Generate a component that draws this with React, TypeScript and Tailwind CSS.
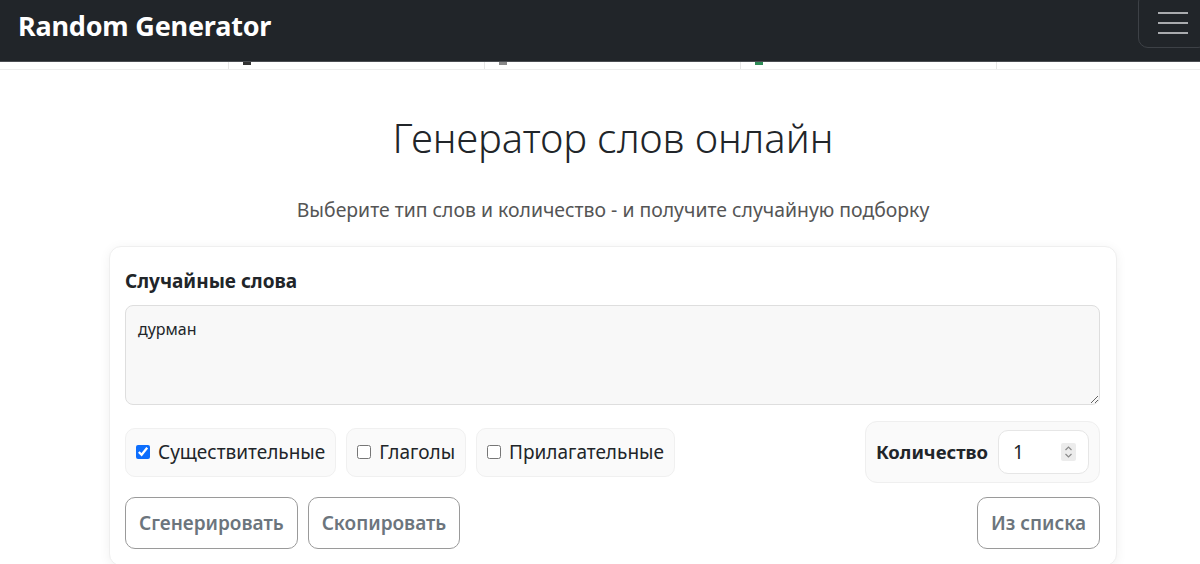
import { useState } from "react";

const tiles = [
  { left: "w-[229px]", dot: "" },
  { left: "w-[256px]", dot: "bg-[#333]" },
  { left: "w-[256px]", dot: "bg-[#888]" },
  { left: "w-[256px]", dot: "bg-[#2e8b57]" },
];

const kinds = [
  { label: "Существительные", checked: true },
  { label: "Глаголы", checked: false },
  { label: "Прилагательные", checked: false },
];

export default function App() {
  const [selected, setSelected] = useState(kinds.map((k) => k.checked));
  const [count, setCount] = useState(1);

  return (
    <div className="h-[564px] overflow-hidden bg-white font-['Noto_Sans','Open_Sans',sans-serif] text-[#212529]">
      <header className="flex h-[62px] items-start justify-between border-b border-[#4a4d52] bg-[#212529]">
        <span className="pl-[18px] pt-[6px] text-[27px] font-bold tracking-[-0.2px] text-white">Random Generator</span>
        <button className="mr-[-8px] mt-[-8px] flex h-[56px] w-[70px] flex-col justify-center gap-[8px] rounded-[10px] border border-[#3d4146] pl-[19px] pt-[6px]">
          <span className="h-[2px] w-[30px] bg-[#a9abae]" />
          <span className="h-[2px] w-[30px] bg-[#a9abae]" />
          <span className="h-[2px] w-[30px] bg-[#a9abae]" />
        </button>
      </header>

      <div className="flex h-[8px] border-b border-[#eeeeee]">
        {tiles.map((t, i) => (
          <div key={i} className={`${t.left} relative border-r border-[#e6e6e6]`}>
            {t.dot && <span className={`absolute left-[14px] top-0 h-[3px] w-[8px] ${t.dot}`} />}
          </div>
        ))}
      </div>

      <main className="ml-[109px] w-[1008px]">
        <h1 className="mt-[44px] text-center text-[40px] font-light leading-[48px] text-[#212529]">
          Генератор слов онлайн
        </h1>
        <p className="mt-[34px] text-center text-[19.4px] leading-[28px] text-[#555555]">
          Выберите тип слов и количество - и получите случайную подборку
        </p>

        <section className="mt-[22px] rounded-[12px] border border-[#efefef] bg-white pb-[16px] pl-[15px] pr-[16px] pt-[21px] shadow-[0_2px_12px_rgba(0,0,0,0.06)]">
          <h2 className="text-[19px] font-bold leading-[26px]">Случайные слова</h2>
          <textarea
            className="mt-[11px] block h-[100px] w-full resize-y rounded-[8px] border border-[#dedede] bg-[#f8f8f8] px-[12px] py-[11px] text-[16px] leading-[24px] text-[#212529] outline-none"
            defaultValue="дурман"
          />

          <div className="mt-[16px] flex items-center justify-between">
            <div className="flex gap-[10px]">
              {kinds.map((k, i) => (
                <label
                  key={k.label}
                  className="flex h-[49px] items-center gap-[8px] rounded-[10px] border border-[#f0f0f0] bg-[#fafafa] px-[10px] text-[19px]"
                >
                  <input
                    type="checkbox"
                    checked={selected[i]}
                    onChange={() => setSelected(selected.map((v, j) => (j === i ? !v : v)))}
                    className="h-[14px] w-[14px] accent-[#0d6efd]"
                  />
                  {k.label}
                </label>
              ))}
            </div>
            <div className="flex h-[62px] items-center gap-[10px] rounded-[12px] border border-[#efefef] bg-[#fafafa] pl-[10px] pr-[10px]">
              <span className="text-[18.5px] font-bold">Количество</span>
              <div className="flex h-[44px] w-[91px] items-center justify-between rounded-[10px] border border-[#e6e6e6] bg-white pl-[14px] pr-[12px]">
                <input
                  type="text"
                  value={count}
                  onChange={(e) => setCount(Number(e.target.value) || 1)}
                  className="w-[40px] bg-transparent text-[19px] outline-none"
                />
                <span className="flex h-[18px] w-[15px] items-center justify-center rounded-[2px] bg-[#ececec]">
                  <svg width="9" height="14" viewBox="0 0 9 14" fill="none" stroke="#8a8a8a" strokeWidth="1.2">
                    <path d="M1.5 5 L4.5 2 L7.5 5" />
                    <path d="M1.5 9 L4.5 12 L7.5 9" />
                  </svg>
                </span>
              </div>
            </div>
          </div>

          <div className="mt-[14px] flex items-center justify-between">
            <div className="flex gap-[10px]">
              <button className="h-[52px] rounded-[10px] border border-[#9a9a9a] px-[13px] text-[19px] font-semibold text-[#6c757d]">
                Сгенерировать
              </button>
              <button className="h-[52px] rounded-[10px] border border-[#9a9a9a] px-[13px] text-[19px] font-semibold text-[#6c757d]">
                Скопировать
              </button>
            </div>
            <button className="h-[52px] rounded-[10px] border border-[#9a9a9a] px-[13px] text-[19px] font-semibold text-[#6c757d]">
              Из списка
            </button>
          </div>
        </section>
      </main>
    </div>
  );
}
